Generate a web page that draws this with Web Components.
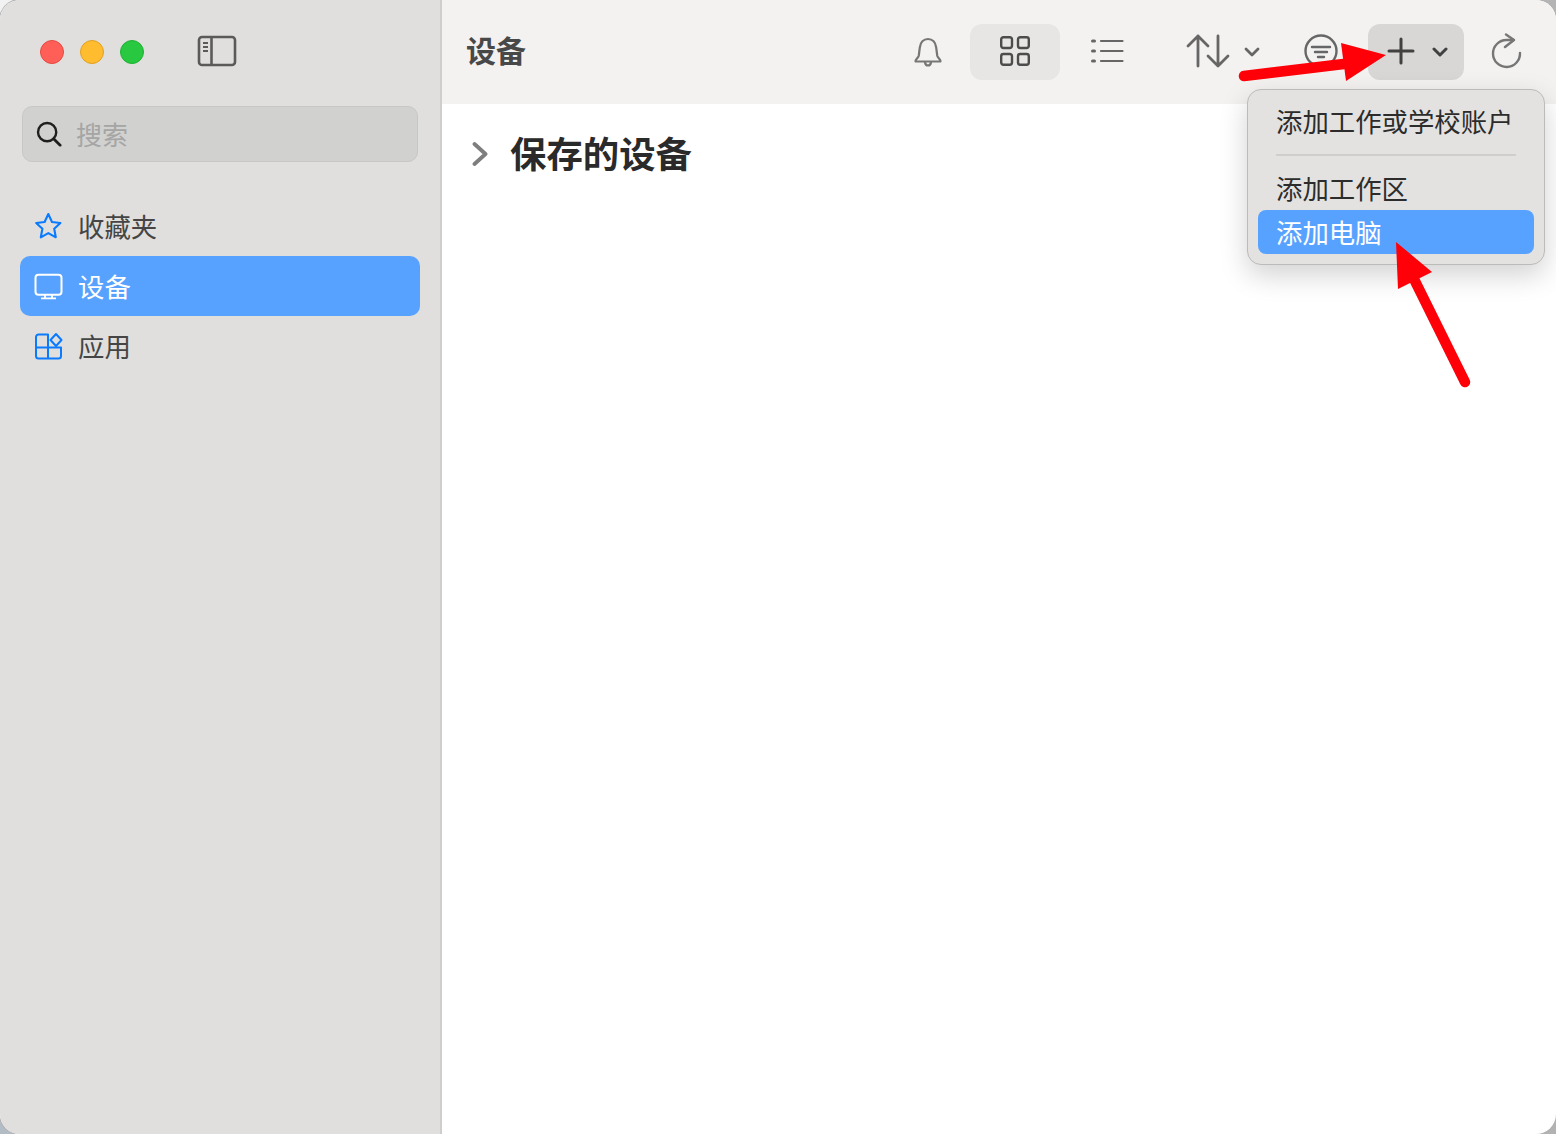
<!DOCTYPE html>
<html lang="zh">
<head>
<meta charset="utf-8">
<title>设备</title>
<style>
  html, body { margin: 0; height: 100%; }
  html {
    background:
      linear-gradient(90deg, #f2f2f2, #b4b4b4) top / 100% 50% no-repeat,
      linear-gradient(90deg, #b3bcc4, #b2b2b2) bottom / 100% 50% no-repeat;
  }
  body { font-family: "Noto Sans CJK SC", "Liberation Sans", sans-serif; overflow: hidden; }
</style>
</head>
<body>
<app-window>
  <app-sidebar slot="sidebar">
    <nav-item label="收藏夹" icon="star"></nav-item>
    <nav-item label="设备" icon="monitor" active></nav-item>
    <nav-item label="应用" icon="apps"></nav-item>
  </app-sidebar>
  <app-toolbar slot="toolbar" heading="设备"></app-toolbar>
  <device-section slot="content" heading="保存的设备"></device-section>
  <add-menu slot="overlay"></add-menu>
  <red-arrows slot="overlay"></red-arrows>
</app-window>

<script>
const ICONS = {
  star: `<path d="M14.300 2l3.700 8 8.400 1-6.200 5.800 1.600 8.500-7.500-4.200-7.500 4.200 1.600-8.500L2.200 11l8.400-1z" fill="none" stroke="currentColor" stroke-width="2.100" stroke-linejoin="round"/>`,
  monitor: `<rect x="1.500" y="2.800" width="26" height="20" rx="3" fill="none" stroke="currentColor" stroke-width="2"/><path d="M11 23v3M18 23v3M7 26.400h15" stroke="currentColor" stroke-width="1.800" fill="none"/>`,
  apps: `<path d="M14 15.500V2.500H4.500A2.500 2.500 0 0 0 2 5v19a2.500 2.500 0 0 0 2.500 2.500h20a2.500 2.500 0 0 0 2.500-2.500v-8.500H2M14 15.500v11" fill="none" stroke="currentColor" stroke-width="2" stroke-linejoin="round"/><path d="M22 2l5.500 6-5.500 6-5.500-6z" fill="none" stroke="currentColor" stroke-width="2" stroke-linejoin="round"/>`
};

class AppWindow extends HTMLElement {
  constructor() {
    super();
    this.attachShadow({ mode: 'open' });
    this.shadowRoot.innerHTML = `
      <style>
        :host { display: block; position: relative; width: 1556px; height: 1134px; }
        .frame {
          display: grid; grid-template-columns: 442px 1fr;
          width: 100%; height: 100%;
          border-radius: 20px; overflow: hidden; background: #fff;
          box-shadow: 0 0 0 1px #b0b0b0;
        }
        .left { min-width: 0; }
        .right { display: flex; flex-direction: column; min-width: 0; }
      </style>
      <div class="frame">
        <div class="left"><slot name="sidebar"></slot></div>
        <div class="right">
          <slot name="toolbar"></slot>
          <slot name="content"></slot>
        </div>
      </div>
      <slot name="overlay"></slot>
    `;
  }
}

class AppSidebar extends HTMLElement {
  constructor() {
    super();
    this.attachShadow({ mode: 'open' });
    this.shadowRoot.innerHTML = `
      <style>
        :host {
          display: flex; flex-direction: column; height: 100%; box-sizing: border-box;
          background: #e0dfdd; border-right: 2px solid #cfcecc; padding: 0 20px;
        }
        .top { display: flex; align-items: center; height: 104px; padding-left: 20px; gap: 16px; }
        .dot { width: 24px; height: 24px; border-radius: 50%; box-sizing: border-box; }
        .red { background: #ff5f57; border: 1px solid #e5493f; }
        .yellow { background: #febc2e; border: 1px solid #e0a024; }
        .green { background: #28c840; border: 1px solid #20b134; }
        .toggle { margin-left: 37px; margin-top: -2px; color: #5b5a59; display: block; }
        .search {
          display: flex; align-items: center; box-sizing: border-box;
          height: 56px; margin: 2px 2px 0 2px; padding-left: 13px; gap: 14px;
          background: #d1d1d0; border: 1px solid #c8c7c6; border-radius: 10px;
          color: #a5a5a4; font-size: 26px; line-height: 1;
        }
        .items { display: flex; flex-direction: column; margin-top: 34px; }
      </style>
      <div class="top">
        <span class="dot red"></span><span class="dot yellow"></span><span class="dot green"></span>
        <svg class="toggle" width="40" height="32" viewBox="0 0 40 32" fill="none" stroke="currentColor">
          <rect x="2" y="2" width="36" height="28" rx="3" stroke-width="2.600"/>
          <path d="M14.500 2v28" stroke-width="2.600"/>
          <path d="M6 8h5M6 12h5M6 16h5" stroke-width="1.800"/>
        </svg>
      </div>
      <div class="search">
        <svg width="26" height="26" viewBox="0 0 28 28" fill="none" stroke="#1f1f1f" stroke-width="2.600" stroke-linecap="round">
          <circle cx="12" cy="12" r="9.800"/><path d="M19 19l7 7" stroke-width="3"/>
        </svg>
        <span>搜索</span>
      </div>
      <div class="items"><slot></slot></div>
    `;
  }
}

class NavItem extends HTMLElement {
  constructor() {
    super();
    this.attachShadow({ mode: 'open' });
  }

  connectedCallback() {
    const icon = ICONS[this.getAttribute('icon')] || '';
    this.shadowRoot.innerHTML = `
      <style>
        :host { display: block; }
        .row {
          display: flex; align-items: center; height: 60px; padding-left: 14px; gap: 15px;
          border-radius: 10px; color: #454545; font-size: 26.400px; line-height: 1;
        }
        svg { color: #0a7aff; flex: none; }
        :host([active]) .row { background: #58a2ff; color: #fff; }
        :host([active]) svg { color: #fff; }
      </style>
      <div class="row">
        <svg width="29" height="29" viewBox="0 0 29 29">${icon}</svg>
        <span>${this.getAttribute('label')}</span>
      </div>
    `;
  }
}

class AppToolbar extends HTMLElement {
  constructor() {
    super();
    this.attachShadow({ mode: 'open' });
  }

  connectedCallback() {
    this.shadowRoot.innerHTML = `
      <style>
        :host {
          display: flex; align-items: center; height: 104px; flex: none; box-sizing: border-box;
          background: #f3f2f0; color: #666; padding: 0 30px 0 24px;
        }
        h1 { margin: 0; font-size: 30px; line-height: 1; font-weight: 700; color: #484848; flex: 1; position: relative; top: -3px; }
        .btn {
          display: flex; align-items: center; justify-content: center; height: 56px; border-radius: 12px;
          box-sizing: border-box; flex: none;
        }
        .btn svg { margin-top: -2px; }
        .bell { width: 44px; margin-right: 20px; color: #767676; }
        .bell svg { margin-top: -1px; }
        .grid { width: 90px; background: #e7e6e4; color: #4c4c4c; margin-right: 2px; }
        .list { width: 90px; margin-right: 23px; }
        .sort { width: 96px; margin-right: 25px; gap: 14px; justify-content: flex-start; padding-left: 11px; }
        .sort svg:last-child, .add svg:last-child { margin-top: 0; }
        .filter { width: 50px; margin-right: 22px; }
        .add { width: 96px; background: #d8d7d5; color: #414141; gap: 17px; margin-right: 22px; justify-content: flex-start; padding-left: 19px; }
        .reload { width: 40px; color: #767676; }
        svg { display: block; fill: none; stroke: currentColor; stroke-linecap: round; stroke-linejoin: round; }
      </style>
      <h1>${this.getAttribute('heading')}</h1>
      <div class="btn bell">
        <svg width="30" height="32" viewBox="0 0 30 32" stroke-width="2.200">
          <path d="M2.500 25.500h25c.6-1.800-2.800-3.200-3.300-6l-1-8C22.600 6.500 19.500 3 15 3S7.400 6.500 6.800 11.500l-1 8c-.5 2.800-3.900 4.200-3.300 6z"/>
          <path d="M12 26.500c.4 2 1.500 3 3 3s2.600-1 3-3"/>
        </svg>
      </div>
      <div class="btn grid">
        <svg width="30" height="30" viewBox="0 0 30 30" stroke-width="2.400">
          <rect x="1.200" y="1.200" width="10.800" height="10.800" rx="2.200"/><rect x="18" y="1.200" width="10.800" height="10.800" rx="2.200"/>
          <rect x="1.200" y="18" width="10.800" height="10.800" rx="2.200"/><rect x="18" y="18" width="10.800" height="10.800" rx="2.200"/>
        </svg>
      </div>
      <div class="btn list">
        <svg width="34" height="28" viewBox="0 0 34 28" stroke-width="2.200">
          <path d="M11 4h21.500M11 14h21.500M11 24h21.500"/><path d="M2.500 4h2M2.500 14h2M2.500 24h2" stroke-width="3"/>
        </svg>
      </div>
      <div class="btn sort">
        <svg width="44" height="34" viewBox="0 0 44 34" stroke-width="2.800">
          <path d="M12 32V2M2 12L12 2l10 10"/><path d="M32 2v30M22 22l10 10 10-10"/>
        </svg>
        <svg width="16" height="10" viewBox="0 0 16 10" stroke-width="2.800"><path d="M2 2l6 6 6-6"/></svg>
      </div>
      <div class="btn filter">
        <svg width="34" height="34" viewBox="0 0 34 34" stroke-width="2.400">
          <circle cx="17" cy="17" r="15.500"/><path d="M8 13h18M11 18h12M14 23h6"/>
        </svg>
      </div>
      <div class="btn add">
        <svg width="28" height="28" viewBox="0 0 28 28" stroke-width="3"><path d="M14 2v24M2 14h24"/></svg>
        <svg width="16" height="10" viewBox="0 0 16 10" stroke-width="3"><path d="M2 2l6 6 6-6"/></svg>
      </div>
      <div class="btn reload">
        <svg width="32" height="36" viewBox="0 0 32 36" stroke-width="2.400">
          <path d="M23.500 7H16.500A13.500 13.500 0 1 0 30 20"/><path d="M16 1.500l8 5.500-9 7"/>
        </svg>
      </div>
    `;
  }
}

class DeviceSection extends HTMLElement {
  constructor() {
    super();
    this.attachShadow({ mode: 'open' });
  }

  connectedCallback() {
    this.shadowRoot.innerHTML = `
      <style>
        :host { display: flex; align-items: center; flex: none; height: 100px; padding-left: 30px; gap: 22px; background: #fff; }
        svg { display: block; flex: none; }
        h2 { margin: -4px 0 0; font-size: 36.400px; line-height: 1; font-weight: 700; color: #2a2a2a; }
      </style>
      <svg width="16" height="26" viewBox="0 0 16 26" fill="none" stroke="#7e7e7e" stroke-width="3.800" stroke-linecap="round" stroke-linejoin="round"><path d="M2.500 3l11 10-11 10"/></svg>
      <h2>${this.getAttribute('heading')}</h2>
    `;
  }
}

class AddMenu extends HTMLElement {
  constructor() {
    super();
    this.attachShadow({ mode: 'open' });
    this.shadowRoot.innerHTML = `
      <style>
        :host {
          position: absolute; left: 1247px; top: 89px; width: 298px; height: 176px; box-sizing: border-box;
          display: flex; flex-direction: column; padding: 9px 10px 10px 10px;
          background: #e3e2e1; border: 1px solid #bcbbba; border-radius: 14px;
          box-shadow: 0 10px 28px rgba(0, 0, 0, .18);
          font-size: 26.400px; line-height: 1; color: #2c2c2c;
        }
        .item { display: flex; align-items: center; height: 44px; padding-left: 18px; border-radius: 8px; flex: none; }
        .item.on { background: #58a2ff; color: #fff; }
        hr { border: 0; height: 2px; background: #cfcecd; margin: 11px 18px 10px 18px; flex: none; width: 240px; }
      </style>
      <div class="item">添加工作或学校账户</div>
      <hr>
      <div class="item">添加工作区</div>
      <div class="item on">添加电脑</div>
    `;
  }
}

class RedArrows extends HTMLElement {
  constructor() {
    super();
    this.attachShadow({ mode: 'open' });
    this.shadowRoot.innerHTML = `
      <style>
        :host { position: absolute; inset: 0; pointer-events: none; }
        svg { display: block; }
      </style>
      <svg width="1556" height="1134" viewBox="0 0 1556 1134">
        <path d="M1244 76L1352 63" stroke="#ff0008" stroke-width="10.500" stroke-linecap="round" fill="none"/>
        <path d="M1341 43l45 12-40 26z" fill="#ff0008"/>
        <path d="M1465 382L1411 273" stroke="#ff0008" stroke-width="10.500" stroke-linecap="round" fill="none"/>
        <path d="M1396 242l36 30-34 17z" fill="#ff0008"/>
      </svg>
    `;
  }
}

customElements.define('app-window', AppWindow);
customElements.define('app-sidebar', AppSidebar);
customElements.define('nav-item', NavItem);
customElements.define('app-toolbar', AppToolbar);
customElements.define('device-section', DeviceSection);
customElements.define('add-menu', AddMenu);
customElements.define('red-arrows', RedArrows);
</script>
</body>
</html>
